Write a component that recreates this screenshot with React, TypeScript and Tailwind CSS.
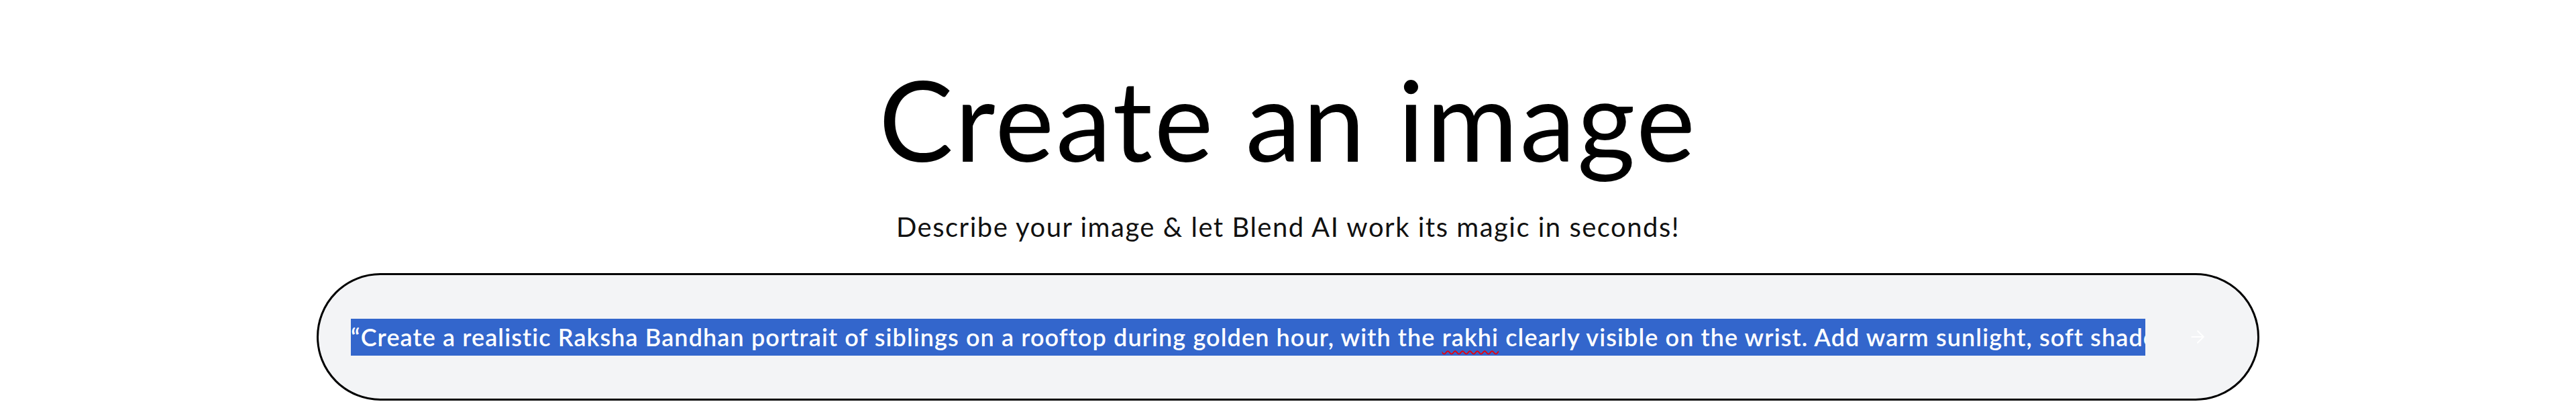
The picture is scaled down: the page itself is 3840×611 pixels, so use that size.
import { ArrowRight } from 'lucide-react';

const PROMPT =
  '“Create a realistic Raksha Bandhan portrait of siblings on a rooftop during golden hour, with the ';
const PROMPT_END =
  ' clearly visible on the wrist. Add warm sunlight, soft shadows, and joyful expressions.”';

export default function App() {
  return (
    <div className="w-full h-[611px] bg-white flex flex-col items-center font-['Lato',sans-serif] text-black">
      <h1 className="mt-[94px] text-[166px] leading-none font-normal tracking-[3px]">
        Create an image
      </h1>
      <p className="mt-[58px] text-[40px] leading-none tracking-[1.5px] text-[#111]">
        Describe your image &amp; let Blend AI work its magic in seconds!
      </p>

      <div className="mt-[49px] w-[2896px] h-[190px] flex items-center border-[3px] border-black rounded-full bg-[#f3f4f6] pl-[48px] pr-[74px]">
        <div className="flex-1 h-[55px] overflow-hidden whitespace-nowrap bg-[#3366cc] text-white text-[36px] leading-[55px] font-semibold tracking-[1.1px]">
          {PROMPT}
          <span className="underline decoration-wavy decoration-red-600 decoration-[2px] underline-offset-[6px]">
            rakhi
          </span>
          {PROMPT_END}
        </div>
        <button className="ml-[63px] w-[30px] h-[30px] flex items-center justify-center text-white">
          <ArrowRight className="w-[30px] h-[30px]" strokeWidth={1.5} />
        </button>
      </div>
    </div>
  );
}
